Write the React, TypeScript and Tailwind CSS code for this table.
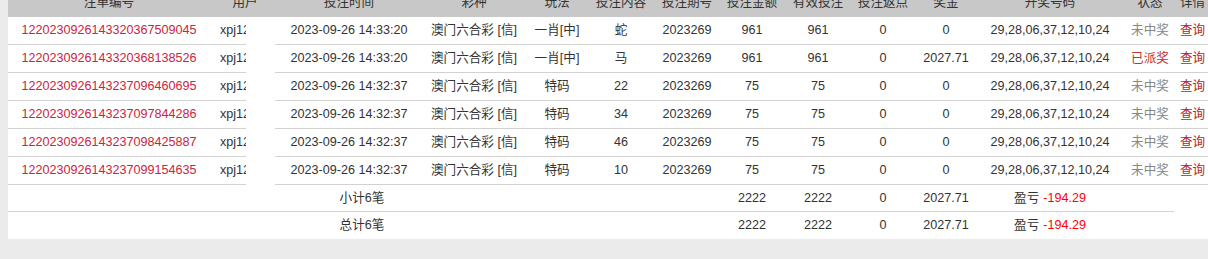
import React from "react";

const font = "font-['Liberation_Sans','Noto_Sans_CJK_SC',sans-serif]";

const rows = [
	{ no: "1220230926143320367509045", time: "2023-09-26 14:33:20", play: "一肖[中]", content: "蛇", amount: "961", valid: "961", bonus: "0", won: false },
	{ no: "1220230926143320368138526", time: "2023-09-26 14:33:20", play: "一肖[中]", content: "马", amount: "961", valid: "961", bonus: "2027.71", won: true },
	{ no: "1220230926143237096460695", time: "2023-09-26 14:32:37", play: "特码", content: "22", amount: "75", valid: "75", bonus: "0", won: false },
	{ no: "1220230926143237097844286", time: "2023-09-26 14:32:37", play: "特码", content: "34", amount: "75", valid: "75", bonus: "0", won: false },
	{ no: "1220230926143237098425887", time: "2023-09-26 14:32:37", play: "特码", content: "46", amount: "75", valid: "75", bonus: "0", won: false },
	{ no: "1220230926143237099154635", time: "2023-09-26 14:32:37", play: "特码", content: "10", amount: "75", valid: "75", bonus: "0", won: false },
];

const cell = "flex items-center justify-center whitespace-nowrap border-b border-[#d2d2d2]";

const Summary = ({ label, last }: { label: string; last?: boolean }) => {
	const b = last ? "" : "border-b border-[#d2d2d2]";
	const c = `flex items-center justify-center whitespace-nowrap ${b}`;
	return (
		<div className="flex h-[27px]">
			<div className={`${c} w-[708px]`}>{label}</div>
			<div className={`${c} w-[72px]`}>2222</div>
			<div className={`${c} w-[60px]`}>2222</div>
			<div className={`${c} w-[70px]`}>0</div>
			<div className={`${c} w-[56px]`}>2027.71</div>
			<div className={`${c} w-[152px] gap-1`}>
				盈亏 <span className="text-[#ff0000]">-194.29</span>
			</div>
			<div className={`${c} w-[48px]`} />
			<div className="w-[34px]" />
		</div>
	);
};

export default function App() {
	const head = [
		["注单编号", "w-[202px]"],
		["用户", "w-[65px] pl-[5px]"],
		["投注时间", "w-[143px] pl-[5px]"],
		["彩种", "w-[112px]"],
		["玩法", "w-[54px]"],
		["投注内容", "w-[74px]"],
		["投注期号", "w-[58px]"],
		["投注金额", "w-[72px]"],
		["有效投注", "w-[60px]"],
		["投注返点", "w-[70px]"],
		["奖金", "w-[56px]"],
		["开奖号码", "w-[152px]"],
		["状态", "w-[48px]"],
		["详情", "w-[34px] pl-[3px]"],
	];

	return (
		<div className={`h-[259px] overflow-hidden bg-[#ebebeb] pl-[8px] text-[12.6px] text-[#333] ${font}`}>
			<div className="bg-white">
				<div className="-mt-[12px] flex h-[29px] bg-[#c8c8c8]">
					{head.map(([t, w]) => (
						<div key={t} className={`flex items-center justify-center whitespace-nowrap ${w}`}>
							{t}
						</div>
					))}
				</div>
				{rows.map((r) => (
					<div key={r.no} className="flex h-[28px]">
						<div className={`${cell} w-[202px] text-[#cc2340]`}>{r.no}</div>
						<div className="w-[65px]">
							<div className="flex h-full w-[36px] items-center overflow-hidden whitespace-nowrap border-b border-[#d2d2d2] pl-[10px]">
								xpj123456
							</div>
						</div>
						<div className={`${cell} w-[143px] pl-[5px]`}>{r.time}</div>
						<div className={`${cell} w-[112px]`}>澳门六合彩 [信]</div>
						<div className={`${cell} w-[54px]`}>{r.play}</div>
						<div className={`${cell} w-[74px]`}>{r.content}</div>
						<div className={`${cell} w-[58px]`}>2023269</div>
						<div className={`${cell} w-[72px]`}>{r.amount}</div>
						<div className={`${cell} w-[60px]`}>{r.valid}</div>
						<div className={`${cell} w-[70px]`}>0</div>
						<div className={`${cell} w-[56px]`}>{r.bonus}</div>
						<div className={`${cell} w-[152px]`}>29,28,06,37,12,10,24</div>
						<div className={`${cell} w-[48px] ${r.won ? "text-[#c4302f]" : "text-[#888]"}`}>
							{r.won ? "已派奖" : "未中奖"}
						</div>
						<div className={`${cell} w-[34px] pl-[3px] text-[#b3262b]`}>查询</div>
					</div>
				))}
				<Summary label="小计6笔" />
				<Summary label="总计6笔" last />
			</div>
		</div>
	);
}
